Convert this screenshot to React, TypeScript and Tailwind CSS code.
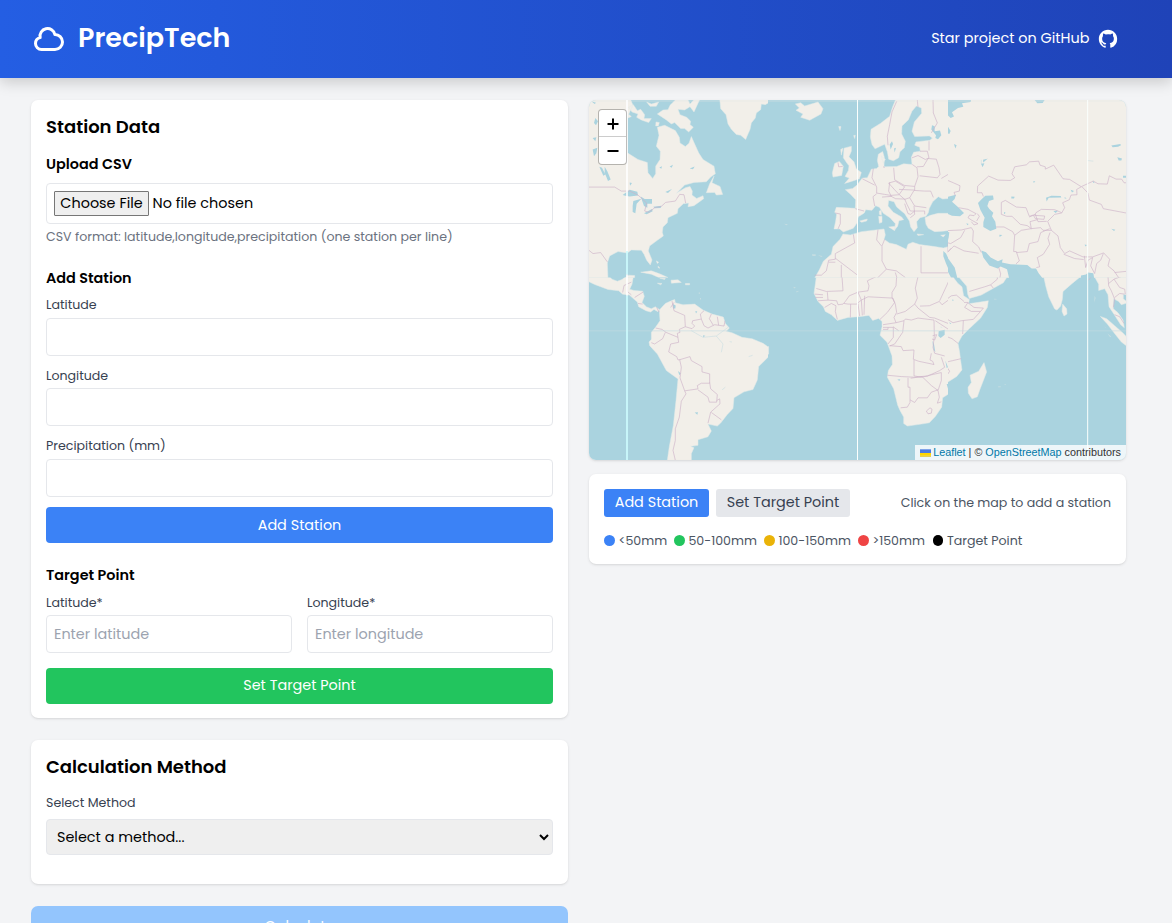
import React from "react";

type Tile = { x: number; y: number; land: string; water?: string; border: string; lake?: string };

const tiles: Tile[] = [
  {
    x: 0, y: 0,
    land: "M-3 0H118V165L150 185L178 194L180 225L194 242L203 228V205L216 185L217 160L205 145L213 112L208 88L230 82L262 98L274 118L276 135L292 146L303 136L310 116L332 165L345 185L378 205L382 228L368 238L355 252L318 254L290 262L266 286L292 270L306 266L313 280L312 292L326 302L345 294L347 303L318 324L300 327L302 316L286 318L270 333L268 347L240 360L238 375L225 388L223 404L226 415L208 428L185 445L181 460L192 487L187 502L176 488L168 470L160 458L130 457L118 466L90 462L65 475L58 496L60 545H-3Z M378 235L372 255L396 266L404 290L385 292L380 284L355 285L365 258Z M118 5H128L135 22L126 40L118 58Z M122 28L136 20L148 38L158 34L170 50L168 62L190 62L182 74L160 66L146 58L150 48L132 42Z M176 12L190 18L212 12L205 25H186Z M118 46L130 56L120 60Z M208 48L225 36L240 35L246 22L262 6H300L306 18L318 5H335L318 42L306 26L290 36L270 34L276 50L296 58L308 70L306 80L316 88L302 102L290 92L278 92L260 74L250 78L235 66Z M395 0H545V12L532 20L520 18L518 35L505 45L502 60L490 75L486 95L480 108L473 125L458 112L445 110L430 94L420 78L414 50L398 32Z M204 72L214 74L211 84H203Z M112 540L122 533L140 534V545H112Z M158 524L190 520L215 529L240 540H212L190 530Z M205 490L212 494L208 498Z M210 506L216 512L210 510Z",
    water: "M118 0H150L142 6H118Z",
    border: "M-3 268H80L100 280L125 280L150 292L176 316L170 340L183 344L200 330L220 326L233 314L262 310L275 290L288 291L293 316M0 456L15 468L38 465L58 493",
    lake: "M104 292L125 276L148 282L150 293L125 296L112 294Z M136 310L160 303L146 318L142 347L134 343V325Z M158 296L170 304H192V318L178 318L178 330L168 325Z M168 347L192 334L194 341L176 350Z M196 327L220 324L218 331L200 332Z M34 207L42 210L52 230L46 234Z M50 207L58 220L68 245L60 250L50 225Z M22 60L30 70L24 82L18 75Z M14 120L25 118L22 130Z M14 155L28 150L25 166L18 175Z M10 10L24 14L20 18Z M182 210L195 206L188 216Z M214 209L222 205L220 213Z M245 206L255 201L251 210Z M305 212L320 206L315 214Z M232 283L252 274L240 286Z M125 254L132 256L126 264Z",
  },
  {
    x: 540, y: 0,
    land: "M385 0H545V302L524 304L511 297L494 312L484 332L481 345L474 356L456 360L446 372L448 390L438 402L428 388L424 370L410 348L386 328L378 312L362 308L360 325L376 344L401 358L407 366L393 369L389 386L379 398L382 378L366 360L346 347L334 329L323 324L312 338L293 336L289 346L271 357L267 376L256 392L226 403L215 394H198L203 370L206 349L200 344L205 329L262 332L263 306L248 290L232 276L254 272L267 262L283 241L298 240L310 214L326 212L332 206L328 188L331 169L344 161L349 178L348 207L386 206L407 198L432 200L430 178L437 163L457 160L455 148L440 142L444 132L486 127L493 120L484 114L440 116L432 100L439 72L461 46L460 30L445 24L432 40L421 66L402 84L401 108L412 130L409 150L396 162L392 180L376 189L362 184L358 162L350 139L321 153L312 140L307 118L309 94L338 76L365 55L374 26Z M471 360L487 353L510 347H545V398L523 401L500 402L481 392L474 380Z M225 409L247 412L280 402L348 394L352 412L348 425L364 436L385 441L415 455L420 440L434 434L455 441L500 447L526 451L545 446V545H138L154 517L166 491L190 470L195 447L216 425Z M228 151L250 145L250 160L243 177L258 192L265 213L280 224L274 243L250 251L230 257L244 241L231 236L241 218L243 204L236 195L226 180Z M200 197L214 191L226 205L221 233L195 238L193 225Z M82 18L98 14L110 24L150 12L165 32L159 48L125 67L98 58L105 48L84 37L94 30Z M334 340L340 338V353L334 350Z M332 356H342V374L334 377Z M362 388L382 386L380 399Z M447 409L467 411L450 414Z M518 413L532 411L526 418Z M340 175L352 184L346 196Z M212 86H219L216 98Z M257 113L262 112L260 122Z M275 370L298 364L296 370L281 374Z M218 155L225 151L220 172Z",
    border: "M386 10L372 42L365 80L358 115L360 142M448 6L450 28M495 6L496 45L508 75L490 105M345 207L350 209M316 212L312 240L326 268L326 286L350 290L368 293L393 291L410 267L382 250L362 256L378 274L393 290M283 243L320 262M377 210L380 246L409 263L440 266L450 237L447 210L433 200M432 180L450 173L472 185L483 180L478 160H456M483 130V158M447 207L466 206L480 182L505 184L513 210L516 230L508 240L455 234M440 266V277L393 275M393 290L410 305L425 300L438 278L470 280L488 280L496 299M425 300L440 325L475 330M368 295L383 303L410 304L417 320L427 340H470V350M326 288L315 297L320 325M342 298L370 296L362 280L365 254M262 333L288 340M202 346L217 349V378L210 394M256 410L260 436L202 468V485L182 488L175 520L160 533H140M202 482L270 534M202 494H182M220 502V545M330 396L326 427L342 447V490L355 515L325 545M342 445L350 425M355 515L385 520L412 540M459 446V526H545M382 525L388 545M410 318L420 348L428 350L440 340M438 325L440 350L427 360M540 230L520 242M540 438V465M210 194L212 207L224 206",
    lake: "M500 100L516 98L520 112L510 124L502 120L504 112L490 95L492 82L500 85Z M365 140L372 130L375 138L368 155Z M378 152L384 150L380 164Z M404 155H413L406 168Z M526 460L534 468L541 482V514L534 498L526 476Z",
  },
  {
    x: 1080, y: 0,
    land: "M-3 0H545V545H-3Z",
    water: "M-3 0H70L68 12L42 16L46 26L30 30L12 43L18 56L8 60L-3 50Z M260 6H290L284 15L268 16Z M-3 298L24 291L20 304L12 312L30 328L48 346L36 356L12 354L-3 348Z M90 316L100 305L112 294L135 293L137 305L123 310L118 325L124 334L136 345L132 356L142 372L145 393L127 400L106 388V374L110 360L97 336Z M100 459L114 464L128 480L150 491L164 485L162 495L187 500L238 502L251 513H264L272 527L286 545H184L177 515L158 507L149 513L124 504L106 480Z M-3 478L20 510L29 545H12L-3 518Z M398 545L399 534L414 531L420 525L436 527L439 545Z M-3 82L8 99L4 108L-3 106Z M-3 402L4 404L2 420L-3 440Z",
    border: "M-3 247L16 255L36 264L34 280L18 284L22 294M88 285L89 265L122 235L150 247L187 248L200 240L192 228L200 207L235 201L245 192L272 190L276 202L292 207L292 214L317 202L345 243L365 245L400 267L386 275L387 291L369 292L364 306L344 315L350 330L341 346L320 350L299 371L310 398H285L278 390L250 393L238 384L217 380L192 356H176L160 350V314L172 308L205 328L234 330L244 356L256 352L262 363L288 365L290 355L260 353L264 345L280 335L320 336L341 345M88 285L102 285L106 296M244 358L262 350L270 372L296 371M250 393L246 372L268 366M250 393L220 398L200 413L194 402L168 388L144 388M200 413L197 462H205L214 490L204 499M205 465L238 462L244 438L270 432L278 405L305 393M310 398L330 415L337 450L350 468L365 460L405 478H434L467 466L485 485M306 405L300 422L305 440L286 470L268 480L275 508L265 510M347 470L380 483L407 486M409 475L413 510L420 488L434 480L428 505L440 528M466 468L458 488L446 498L440 528M485 485L480 505L498 520L515 545M500 525L540 521M401 266L436 250L450 258L478 259L484 234L504 244L521 244L528 255H545M401 266L420 286L424 307L460 320L466 333L540 347M32 330L60 335L84 348L78 354L65 352L60 360L70 367L90 378L78 382L70 372M88 348L94 356L86 370M-3 399L40 397L70 390L76 400L74 432L92 448L100 465M50 398L38 420L8 438L-3 435M-3 466L18 445L48 460L92 467M9 452L0 462M152 509L158 529L155 545",
    lake: "M294 300L310 294L338 295L340 299L302 300L296 311Z M190 296L200 297L198 302H190Z M316 340L330 339L323 346Z M368 276L378 280L372 284Z M434 248L440 255L436 256Z M99 198L109 196L104 208Z M490 143L517 138L519 142L510 147L494 148Z M508 178L522 182L520 188H512Z M490 393L502 396L498 400Z M154 411L163 412L155 418Z M55 377L62 379L58 383Z M18 138L26 142L22 152Z M525 234H535V240H525Z M410 441L417 442L412 447Z M350 298L356 302H350Z M256 250L262 251L257 256Z M168 343L173 345L168 350Z M105 186L118 183L106 193Z",
  },
  {
    x: 0, y: 540,
    land: "M-3 -3H64L72 5L88 11L102 6L113 -3H136L132 20L125 35L138 39L164 41L169 57L162 75L175 88L190 94L202 88L214 96L210 103L198 96L188 104L174 100L152 88L148 74L124 53L104 50L92 40L60 36L20 21L-3 10Z M214 98L232 78L248 71L260 66L262 76L285 82L320 80L345 98L372 110L406 119L412 138L424 152L415 162L432 166L462 180L492 184L525 198L545 212V235L512 268L508 308L495 337L468 344L438 362L435 394L418 412L398 438L388 447L360 441L370 462L360 479L330 488V505L308 508L318 512L310 530V550H238L244 508L256 445L264 370L270 305L235 280L208 230L185 205L183 194L190 186V165L203 149L216 130Z M208 17L222 18L218 22Z M215 2L232 2L230 6Z M249 8L270 7L280 15L250 17Z M292 18H305V22H292Z",
    border: "M104 45L108 24L130 14M118 25V42L130 52M140 60L165 44M150 78L164 80M206 90L213 104M252 71L258 100L290 114L292 148L312 154L320 146L312 138L314 130L340 125L337 110L348 100M258 75L248 90M340 125L348 145L360 152L380 142L408 146L411 130M370 110L364 124L376 144M388 118L392 144M292 148L274 156L276 165L268 168L272 195L248 200L242 224L266 238L270 248L276 247L306 238L310 250L342 268V284L365 290V318H340L328 325L330 335L290 341L276 302L280 270L275 247M203 152L222 156L234 165L270 180M232 165L224 184L200 200L190 196M365 316L368 335L388 352L386 375H364L360 360L330 338M386 370L395 365L396 380L368 405L360 438M370 406L400 428M290 341L294 350L280 372L274 420L262 455L262 490L255 520L262 550",
    lake: "M255 80L263 84L262 93H255Z M270 281L278 288L274 294Z M320 406L330 405L328 413Z M322 101L328 102L324 108Z M345 174L352 175L346 180Z",
  },
  {
    x: 540, y: 540,
    land: "M145 -3H545V348L524 362L521 390L502 418L484 437L460 441L418 447L407 439V420L396 400L389 384L377 335L358 300L361 280L373 262L372 236L357 195L336 174L342 148V132L332 123L314 129L303 114L272 118L240 120L208 129L190 112L172 102L166 88L150 72L138 48Z M-3 205L2 208V230L-3 234Z",
    border: "M222 -3L225 40L175 42L145 33M140 50L165 52M142 60H165M150 70L180 68L178 44M170 90L190 78L204 85L202 102L208 126M180 68L206 70L210 82L225 80L232 72L244 55L270 44L300 40L303 25L298 10L325 -3M228 78L240 80H265L280 68L270 44M248 80L247 120M270 78L275 116M280 68L283 114M290 55L288 112M300 58L375 62L380 75L358 105L336 126M280 68L300 58M386 -3L384 25L372 45V60L382 80L386 105L378 120L384 136L345 142M386 110L412 102L440 80L450 92L485 120L500 122L540 138M440 80L448 62L442 32L450 -3M456 86L484 85L514 72L522 82L545 65M384 136L408 130L412 125L430 128L450 122L498 128L499 175L495 210L500 228L530 236M408 130L404 165L380 200L365 206M345 150H360V156H345M360 150H376V180L360 200M375 148L392 160M365 205L400 208L405 220L438 218L436 246L452 252L490 260L498 262L494 252L486 248L490 228M438 248V296L460 300L480 296L515 280L530 270L520 240M358 294L400 298L440 300L480 296M420 302V330H426V376L418 390L398 392M428 303L462 298L490 325L510 340L514 360L508 378L520 374M426 368L440 376L450 362L478 362L490 345L510 338M480 295L520 286V310L510 340M475 402L486 392L492 396L490 408L480 410ZM494 175L506 172L500 188L492 185M545 5L515 70M502 130L540 155",
    lake: "M512 162L530 157V172L518 182L511 176Z M493 190L498 200L502 225L497 218Z M532 250L540 270L536 272Z M536 320H540V335Z M388 307L397 306L394 311Z M518 148L524 150H518Z",
  },
  {
    x: 1080, y: 540,
    land: "M-3 -3H14L30 18L42 28L47 55L64 66L62 79L121 70L118 90L98 122L62 156L42 176L30 198L35 225L38 250L42 278L26 298L-3 316Z M31 -3L56 26L59 50L64 63L100 53L135 33L166 16L178 -3Z M287 -3L293 25L302 58L320 95L327 98L338 86L343 66L345 42L370 20L398 -3Z M344 80L356 94L357 110L348 116L342 102Z M439 -3L452 20V39L470 34L480 52L483 88L499 112L518 142L529 151L525 128L510 106L496 94L497 64L512 72L520 82L540 76V-3Z M457 117L476 124L500 145L524 166L540 183V209L520 194L498 166L478 140Z M108 256L116 284L96 336L88 359L72 365L61 348L60 330L70 316L66 294L92 282Z M526 51L542 52L538 74L526 64Z",
    water: "M-3 328L2 335V357L-3 357Z",
    border: "M-3 65L10 55L25 53L48 72M48 75L60 75L50 90L70 102H96M60 76L78 90L106 92L96 104L76 126L40 130L15 136L-3 125M46 130L44 170M-3 178L12 184L30 198M-3 254L14 250L40 244M64 42L90 34L110 28L128 22L136 32M128 22L148 5V-3M430 -3L422 8M480 -3L482 25L490 40L500 65L496 90M482 18L498 5L515 30L530 35L532 50M498 5L520 -3M500 60L515 48L530 50M500 112L515 118L528 138M-3 270L5 282L-3 294",
    lake: "M-3 250L-1 270L-3 275Z M12 66L18 68L14 71Z M4 134L10 140L6 140Z",
  },
];

const islets =
  "M672 470H683V475H673Z M690 473L704 475L700 478Z M588 378L600 380L595 383Z M616 568L624 570L618 573Z M624 582L634 580L626 585Z M332 585H336V589H332Z M336 602H339V606H336Z M1218 604L1228 605L1220 607Z M1230 868L1238 867V870H1230Z M1248 861L1254 860L1252 863Z M1550 688L1556 690H1550Z M1558 708L1570 718L1566 720Z M1520 595L1523 602L1518 616Z";

const rivers =
  "M310 700L345 720L385 716L420 690M385 716L405 740L400 765M425 733L432 734M482 778L494 774M402 878L412 870M1185 193L1198 183M1180 186V198M1498 188L1516 190";

function WorldMap() {
  return (
    <svg viewBox="3 6 1611 1083" preserveAspectRatio="none" className="block h-full w-full" aria-hidden="true">
      <defs>
        <clipPath id="tile"><rect x="0" y="0" width="540.5" height="552" /></clipPath>
      </defs>
      {tiles.map((t, i) => (
        <g key={i} transform={`translate(${t.x} ${t.y})`} clipPath="url(#tile)">
          <rect width="541" height="552" fill="#aad3df" />
          <path d={t.land} fill="#f2efe9" stroke="#e3ebe8" strokeWidth="1.5" strokeLinejoin="round" />
          {t.water && <path d={t.water} fill="#aad3df" />}
          {t.lake && <path d={t.lake} fill="#aad3df" />}
          <path d={t.border} fill="none" stroke="#cdb4c9" strokeOpacity=".65" strokeWidth="3" strokeLinejoin="round" />
        </g>
      ))}
      <path d={islets} fill="#dbe6e3" opacity=".55" />
      <path d={rivers} fill="none" stroke="#aad3df" strokeOpacity=".5" strokeWidth="2" />
      <path d="M0 700.5H1620" stroke="#c4dbe3" strokeOpacity=".6" strokeWidth="3" />
      <path d="M0 9H1620" stroke="#e4e9e9" strokeOpacity=".5" strokeWidth="3" />
      <path d="M117 0V460M117 530V595" stroke="#fff" strokeOpacity=".95" strokeWidth="5" />
      <path d="M117 460V530M117 595V1092" stroke="#cdfcfe" strokeWidth="5" />
      <path d="M808.5 0V1092M1499 0V1092" stroke="#fbfffd" strokeWidth="3" />
    </svg>
  );
}

function Field({ label, placeholder, className = "" }: { label: string; placeholder?: string; className?: string }) {
  return (
    <label className={`block ${className}`}>
      <span className="block text-[12.6px] leading-[18px] text-[#374151]">{label}</span>
      <input
        placeholder={placeholder}
        className="block h-[38px] w-full rounded-[4px] border border-[#e5e7eb] px-[7px] placeholder:text-[#9ca3af]"
      />
    </label>
  );
}

const legend = [
  { label: "<50mm", dot: "bg-[#3b82f6]", box: "w-[70px]" },
  { label: "50-100mm", dot: "bg-[#22c55e]", box: "w-[90px]" },
  { label: "100-150mm", dot: "bg-[#eab308]", box: "w-[94px]" },
  { label: ">150mm", dot: "bg-[#ef4444]", box: "w-[74.5px]" },
  { label: "Target Point", dot: "bg-black", box: "w-[92px]" },
];

const card = "rounded-[7px] bg-white shadow-[0_1px_3px_rgba(0,0,0,0.1),0_1px_2px_-1px_rgba(0,0,0,0.1)]";

export default function App() {
  return (
    <div className="flex h-screen flex-col overflow-hidden bg-[#f3f4f6] font-['Poppins','Inter',sans-serif] text-[14.4px] leading-[22px] text-black">
      <header className="z-10 flex h-[78px] shrink-0 items-center justify-between bg-linear-to-r/srgb from-[#245ee3] to-[#1f43b8] pr-[53px] pl-[31px] text-white shadow-[0_4px_14px_rgba(0,0,0,0.18)]">
        <div className="flex items-center gap-[11px]">
          <svg viewBox="0 0 24 24" className="size-9" fill="none" stroke="currentColor" strokeWidth="2" strokeLinecap="round" strokeLinejoin="round">
            <path d="M3 15a4 4 0 004 4h9a5 5 0 10-.1-9.999 5 5 0 10-9.78 2.096A4.001 4.001 0 003 15z" />
          </svg>
          <h1 className="pb-[2px] text-[27px] leading-[32px] font-semibold">PrecipTech</h1>
        </div>
        <a className="flex items-center gap-[7.5px]">
          <span className="pb-[2px]">Star project on GitHub</span>
          <svg viewBox="0 0 24 24" className="size-[22px]" fill="currentColor">
            <path d="M12 2C6.477 2 2 6.484 2 12.017c0 4.425 2.865 8.18 6.839 9.504.5.092.682-.217.682-.483 0-.237-.008-.868-.013-1.703-2.782.605-3.369-1.343-3.369-1.343-.454-1.158-1.11-1.466-1.11-1.466-.908-.62.069-.608.069-.608 1.003.07 1.531 1.032 1.531 1.032.892 1.53 2.341 1.088 2.91.832.092-.647.35-1.088.636-1.338-2.22-.253-4.555-1.113-4.555-4.951 0-1.093.39-1.988 1.029-2.688-.103-.253-.446-1.272.098-2.65 0 0 .84-.27 2.75 1.026A9.564 9.564 0 0112 6.844c.85.004 1.705.115 2.504.337 1.909-1.296 2.747-1.027 2.747-1.027.546 1.379.202 2.398.1 2.651.64.7 1.028 1.595 1.028 2.688 0 3.848-2.339 4.695-4.566 4.943.359.309.678.92.678 1.855 0 1.338-.012 2.419-.012 2.747 0 .268.18.58.688.482A10.019 10.019 0 0022 12.017C22 6.484 17.522 2 12 2z" />
          </svg>
        </a>
      </header>

      <main className="grid grid-cols-[537px_537px] items-start gap-x-[21px] pt-[22px] pl-[31px]">
        <div>
          <section className={`${card} h-[618px] p-[15px]`}>
            <h2 className="mb-[15px] text-[18px] leading-[23px] font-semibold">Station Data</h2>
            <h3 className="font-semibold">Upload CSV</h3>
            <div className="mt-[8px] flex h-[41px] items-center rounded-[4px] border border-[#e5e7eb] pl-[7px]">
              <button className="flex h-[25px] w-[95px] items-center justify-center rounded-[1px] border border-[#767676] bg-[#efefef] pb-[1px] leading-[22px]">Choose File</button>
              <span className="ml-[3.6px] pb-[2px]">No file chosen</span>
            </div>
            <p className="mt-[4px] text-[12.6px] leading-[18px] text-[#6b7280]">CSV format: latitude,longitude,precipitation (one station per line)</p>

            <h3 className="mt-[21px] mb-[7px] font-semibold">Add Station</h3>
            <Field label="Latitude" className="[&>input]:mt-[4px]" />
            <Field label="Longitude" className="mt-[11px] [&>input]:mt-[3px]" />
            <Field label="Precipitation (mm)" className="mt-[11px] [&>input]:mt-[4px]" />
            <button className="mt-[10px] h-[36px] w-full rounded-[4px] bg-[#3b82f6] text-white">Add Station</button>

            <h3 className="mt-[21px] font-semibold">Target Point</h3>
            <div className="mt-[8px] grid grid-cols-2 gap-[15px]">
              <Field label="Latitude*" placeholder="Enter latitude" className="[&>input]:mt-[3px]" />
              <Field label="Longitude*" placeholder="Enter longitude" className="[&>input]:mt-[3px]" />
            </div>
            <button className="mt-[15px] h-[36px] w-full rounded-[4px] bg-[#22c55e] pb-[2px] text-white">Set Target Point</button>
          </section>

          <section className={`${card} mt-[22px] h-[144px] p-[15px]`}>
            <h2 className="mb-[16px] text-[18px] leading-[23px] font-semibold">Calculation Method</h2>
            <p className="text-[12.6px] leading-[18px] text-[#374151]">Select Method</p>
            <div className="mt-[7px] flex h-[36px] items-center justify-between rounded-[4px] border border-[#e5e7eb] bg-[#efefef] pr-[3px] pl-[10px]">
              <span>Select a method...</span>
              <svg viewBox="0 0 10 7" className="h-[7px] w-[10px]" fill="none" stroke="#000" strokeWidth="2">
                <path d="M1 1l4 4 4-4" />
              </svg>
            </div>
          </section>

          <button className="mt-[22px] h-[40px] w-full rounded-[7px] bg-[#93c5fd] text-white">Calculate</button>
        </div>

        <div>
          <section className={`${card} relative h-[360px] overflow-hidden`}>
            <WorldMap />
            <div className="absolute top-[9px] left-[9px] flex h-[56px] w-[29px] flex-col rounded-[4px] border border-[#00000040] bg-white bg-clip-padding text-black">
              <span className="flex h-[27px] items-center justify-center border-b border-[#ccc] pt-[2px]">
                <svg viewBox="0 0 12 12" className="size-[12px]" stroke="#000" strokeWidth="2"><path d="M6 .5v11M.5 6h11" /></svg>
              </span>
              <span className="flex h-[27px] items-center justify-center">
                <svg viewBox="0 0 12 12" className="size-[12px]" stroke="#000" strokeWidth="2"><path d="M.5 6h11" /></svg>
              </span>
            </div>
            <div className="absolute right-0 bottom-0 flex h-[15px] items-center bg-[#ffffffcc] pr-[5px] pl-[5px] font-['Liberation_Sans',sans-serif] text-[10.8px] leading-[15px] whitespace-pre text-[#333]">
              <svg viewBox="0 0 12 8" className="mr-[2px] h-[8px] w-[11px]">
                <path fill="#4C7BE1" d="M0 0h12v4H0z" />
                <path fill="#FFD500" d="M0 4h12v3H0z" />
                <path fill="#E0BC00" d="M0 7h12v1H0z" />
              </svg>
              <span className="text-[#0078a8]">Leaflet</span> | © <span className="text-[#0078a8]">OpenStreetMap</span> contributors
            </div>
          </section>

          <section className={`${card} mt-[14px] h-[90px] p-[15px]`}>
            <div className="flex items-center">
              <button className="h-[28px] w-[105px] rounded-[3px] bg-[#3b82f6] pb-[2px] text-white">Add Station</button>
              <button className="ml-[7px] h-[28px] w-[134px] rounded-[3px] bg-[#e5e7eb] pb-[2px] text-[#374151]">Set Target Point</button>
              <span className="ml-auto text-[12.6px] leading-[18px] text-[#4b5563]">Click on the map to add a station</span>
            </div>
            <div className="mt-[15px] flex text-[12.6px] leading-[18px] text-[#4b5563]">
              {legend.map((l) => (
                <span key={l.label} className={`flex shrink-0 items-center gap-[3.6px] whitespace-nowrap ${l.box}`}>
                  <i className={`mb-[1px] size-[10.8px] shrink-0 rounded-full ${l.dot}`} />
                  {l.label}
                </span>
              ))}
            </div>
          </section>
        </div>
      </main>
    </div>
  );
}
